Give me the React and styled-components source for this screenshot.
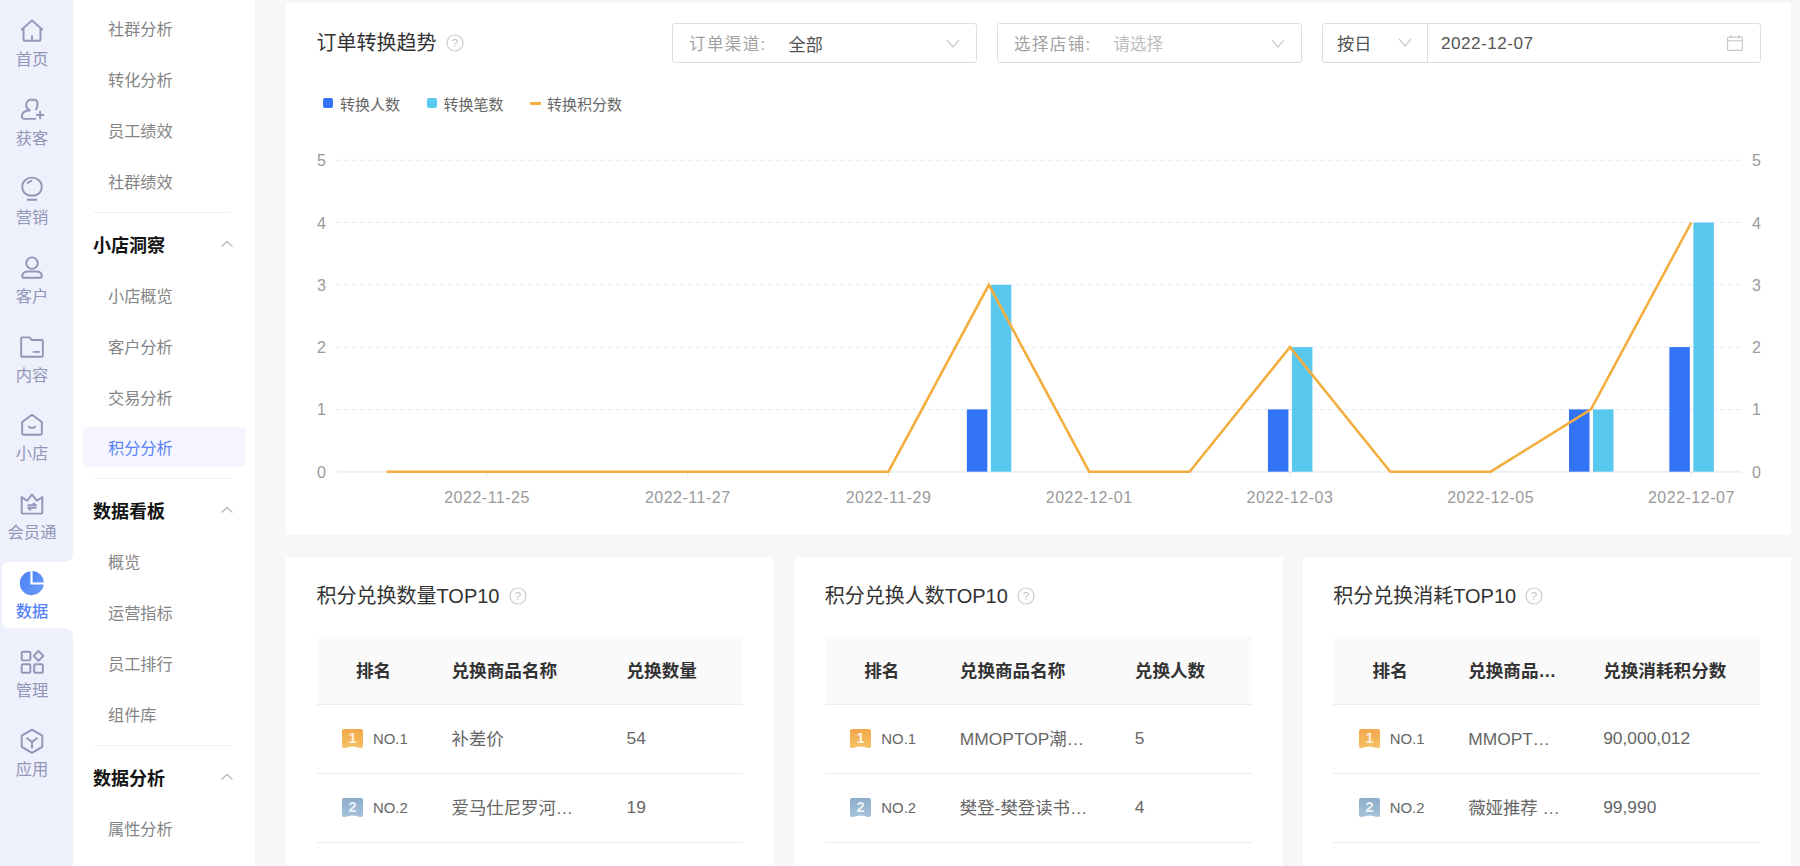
import React from "react";
import styled, { createGlobalStyle } from "styled-components";

const GlobalStyle = createGlobalStyle`
	html, body, #root { margin: 0; padding: 0; height: 100%; }
	body {
		background: #f7f7f7;
		font-family: "Liberation Sans", "Noto Sans CJK SC", sans-serif;
		overflow: hidden;
	}
	* { box-sizing: border-box; }
`;

const RAIL_BG = "#eef0fc";
const RAIL_TEXT = "#9296b7";
const BLUE = "#5b84f8";

const Page = styled.div`
	display: flex;
	width: 1800px;
	height: 866px;
	overflow: hidden;
`;

const Rail = styled.nav`
	width: 73px;
	flex: none;
	padding-top: 10px;
	background: ${RAIL_BG};
	display: flex;
	flex-direction: column;
	gap: 12.9px;
`;

const RailItem = styled.a`
	position: relative;
	height: 66px;
	margin-left: 2px;
	padding: 8px 11px 0 0;
	display: flex;
	flex-direction: column;
	align-items: center;
	border-radius: 6px 0 0 6px;
	font-size: 16.3px;
	line-height: 22px;
	white-space: nowrap;
	color: ${(p) => (p.$active ? BLUE : RAIL_TEXT)};
	background: ${(p) => (p.$active ? "#fff" : "transparent")};
	font-weight: ${(p) => (p.$active ? 500 : 400)};
	svg { display: block; margin-bottom: 4px; }

	${(p) =>
		p.$active &&
		`
		&::before, &::after {
			content: "";
			position: absolute;
			right: 0;
			width: 8px;
			height: 8px;
		}
		&::before {
			top: -8px;
			background: radial-gradient(circle at 0 0, transparent 7.5px, #fff 8px);
		}
		&::after {
			bottom: -8px;
			background: radial-gradient(circle at 0 100%, transparent 7.5px, #fff 8px);
		}
	`}
`;

const SubNav = styled.aside`
	width: 182px;
	flex: none;
	background: #fff;
	padding: 8px 9px 0 10px;
	display: flex;
	flex-direction: column;
	gap: 10.95px;
`;

const SubItem = styled.a`
	height: 40px;
	flex: none;
	padding-left: 25px;
	display: flex;
	align-items: center;
	font-size: 16.2px;
	border-radius: 4px;
	color: ${(p) => (p.$active ? BLUE : "#858585")};
	background: ${(p) => (p.$active ? "#f4f5fe" : "transparent")};
`;

const SubHead = styled.div`
	height: 40px;
	flex: none;
	padding: 0 12px 0 10px;
	display: flex;
	align-items: center;
	justify-content: space-between;
	font-size: 18px;
	font-weight: 700;
	color: #141414;
`;

const SubDivider = styled.div`
	height: 1px;
	flex: none;
	margin: 0 16px 0 10px;
	background: #f0f0f0;
`;

const Main = styled.main`
	flex: 1;
	min-width: 0;
	padding: 3px 9px 0 31px;
	display: flex;
	flex-direction: column;
	gap: 21.5px;
`;

const Card = styled.section`
	background: #fff;
	padding: 20px 30px 16px 30.5px;
`;

const CardHead = styled.div`
	display: flex;
	align-items: center;
	height: 40px;
`;

const Title = styled.h2`
	margin: 0 auto 0 0;
	display: flex;
	align-items: center;
	gap: 9px;
	font-size: 20px;
	font-weight: 400;
	line-height: 28px;
	color: #333;
`;

const Filters = styled.div`
	display: flex;
	gap: 20.5px;
`;

const Select = styled.div`
	width: 304.5px;
	height: 40px;
	padding: 0 16px;
	display: flex;
	align-items: center;
	border: 1px solid #dedede;
	border-radius: 3px;
	font-size: 17.2px;
	color: #555;
`;

const SelectLabel = styled.span`
	width: 99.5px;
	flex: none;
	font-size: 16.5px;
	letter-spacing: 1.4px;
	color: #a2a2a2;
`;

const SelectValue = styled.span`
	flex: 1;
	color: ${(p) => (p.$empty ? "#bdbdbd" : "#555")};
	font-size: ${(p) => (p.$empty ? "16.5px" : "17.2px")};
`;

const DateGroup = styled.div`
	width: 439px;
	height: 40px;
	display: flex;
	align-items: center;
	border: 1px solid #dedede;
	border-radius: 3px;
	font-size: 17.2px;
	color: #555;
`;

const GroupUnit = styled.div`
	width: 105px;
	height: 100%;
	flex: none;
	padding: 0 15px 2px 14px;
	display: flex;
	align-items: center;
	justify-content: space-between;
	border-right: 1px solid #dedede;
`;

const GroupDate = styled.div`
	flex: 1;
	padding: 0 17px 0 13px;
	display: flex;
	align-items: center;
	justify-content: space-between;
	letter-spacing: 0.45px;
`;

const Legend = styled.div`
	height: 20px;
	margin: 30px 0 0 6.5px;
	display: flex;
	align-items: center;
	font-size: 15px;
	color: #666;
`;

const LegendItem = styled.span`
	display: flex;
	align-items: center;
	margin-right: 26.5px;
	&::before {
		content: "";
		width: ${(p) => (p.$line ? "11px" : "10px")};
		height: ${(p) => (p.$line ? "3px" : "10px")};
		margin-right: ${(p) => (p.$line ? "6px" : "7px")};
		border-radius: ${(p) => (p.$line ? "1px" : "2px")};
		background: ${(p) => p.$color};
	}
`;

const ChartBox = styled.div`
	margin-top: 15.5px;
	height: 390.5px;
	svg { display: block; }
	text { font-family: "Liberation Sans", sans-serif; font-size: 16px; fill: #9a9a9a; }
`;

const TopGrid = styled.div`
	display: grid;
	grid-template-columns: repeat(3, 1fr);
	gap: 20px;
`;

const TopCard = styled(Card)`
	padding: 25px 31px 40px 30.5px;
`;

const TableWrap = styled.div`
	margin-top: 27.5px;
`;

const Row = styled.div`
	display: grid;
	grid-template-columns: ${(p) => p.$columns};
	align-items: center;
	height: ${(p) => (p.$head ? "67.5px" : "69px")};
	border-bottom: 1px solid #ececec;
	background: ${(p) => (p.$head ? "#fafafa" : "#fff")};
	font-size: ${(p) => (p.$head ? "17.6px" : "17.4px")};
	font-weight: ${(p) => (p.$head ? 600 : 400)};
	color: ${(p) => (p.$head ? "#333" : "#666")};
`;

const Cell = styled.div`
	min-width: 0;
	padding: 0 21px ${(p) => (p.$nudge ? "2px" : "0")};
	overflow: hidden;
	white-space: nowrap;
	text-overflow: ellipsis;
	text-align: ${(p) => (p.$center ? "center" : "left")};
`;

const RankCell = styled.div`
	display: flex;
	align-items: center;
	gap: 10px;
	padding-left: 25.5px;
	font-size: 14.9px;
`;

function Icon({ children, color = RAIL_TEXT, sw = 1.8 }) {
	return (
		<svg width="26" height="26" viewBox="0 0 24 24" fill="none" stroke={color} strokeWidth={sw} strokeLinecap="round" strokeLinejoin="round">
			{children}
		</svg>
	);
}

const railIcons = {
	home: (
		<Icon>
			<path d="M12 2.2 2.6 10.6h1.6v9.2c0 .8.5 1.2 1.2 1.2h13.2c.7 0 1.2-.4 1.2-1.2v-9.2h1.6zM12 16.5V21" />
		</Icon>
	),
	add: (
		<Icon>
			<path d="M15.6 11.4c.9-1 1.4-2.2 1.4-3.7V5.6C17 3.9 15.6 2.6 13.900 2.6h-3C8.400 2.600 6.600 4.700 6.600 7.200c0 2.500 1.400 4.300 3.400 5.100-3.300.3-7.200 1.500-7.200 5v1.500c0 .9.600 1.400 1.400 1.400H15" />
			<path d="M19.500 13.600v6M16.500 16.600h6" />
		</Icon>
	),
	bulb: (
		<Icon>
			<path d="M9 18c-3.500-1.200-6-4.200-6-8 0-4.800 4-8.500 9-8.500s9 3.700 9 8.500c0 3.800-2.500 6.800-6 8z" />
			<path d="M8 6.500c1-1.100 2.300-1.700 3.500-1.800M8 22h8" />
		</Icon>
	),
	user: (
		<Icon>
			<circle cx="12" cy="7.500" r="5.300" />
			<path d="M3 19.400c0-3 2.600-4.200 5-4.200h8c2.400 0 5 1.200 5 4.200v.500c0 .8-.4 1.100-1.100 1.100H4.100c-.7 0-1.100-.3-1.100-1.100z" />
		</Icon>
	),
	folder: (
		<Icon>
			<path d="M2 4.200c0-.7.400-1.100 1.100-1.100h6.500l2.300 2.500h9c.7 0 1.100.4 1.100 1.100v13.200c0 .7-.4 1.100-1.100 1.100H3.100c-.7 0-1.100-.4-1.100-1.100zM13.500 16.500h5" />
		</Icon>
	),
	shop: (
		<Icon>
			<path d="M12 2.500 2.900 9.200v10.500c0 .8.500 1.300 1.300 1.300h15.600c.8 0 1.300-.5 1.300-1.300V9.200zM9 13.500c1.500 1.600 4.500 1.600 6 0" />
		</Icon>
	),
	crown: (
		<Icon>
			<path d="M2.500 5.500 7.500 9 12 3.200 16.500 9l5-3.500v14.200c0 .8-.4 1.200-1.200 1.200H3.700c-.8 0-1.200-.4-1.200-1.200zM8.500 13.200h7l-2-1.700M15.500 15.500h-7l2 1.700" />
		</Icon>
	),
	pie: (
		<svg width="26" height="26" viewBox="-1 -1 26 26">
			<defs>
				<linearGradient id="pieFill" x1="0" y1="0" x2="1" y2="1">
					<stop offset="0" stopColor="#4a80f5" />
					<stop offset="1" stopColor="#6c9bfb" />
				</linearGradient>
			</defs>
			<path d="M10.400.3v13.300h13.300A12 12 0 1 1 10.400.3z" fill="url(#pieFill)" />
			<path d="M12.600 0A12 12 0 0 1 24 11.400H12.600z" fill="url(#pieFill)" />
		</svg>
	),
	grid: (
		<Icon>
			<rect x="2.500" y="2.500" width="8" height="8" rx="1" />
			<rect x="2.500" y="14" width="8" height="8" rx="1" />
			<rect x="14" y="14" width="8" height="8" rx="1" />
			<path d="m18 1.800 4.500 4.500-4.500 4.500-4.500-4.500z" />
		</Icon>
	),
	cube: (
		<Icon>
			<path d="M12 1.500 21.500 7v10.500L12 23l-9.500-5.500V7zM7.500 9.500 12 13l4.500-3.500M12 13v5" />
		</Icon>
	),
};

const railItems = [
	["home", "首页"],
	["add", "获客"],
	["bulb", "营销"],
	["user", "客户"],
	["folder", "内容"],
	["shop", "小店"],
	["crown", "会员通"],
	["pie", "数据", true],
	["grid", "管理"],
	["cube", "应用"],
];

const subNav = [
	{ items: ["社群分析", "转化分析", "员工绩效", "社群绩效"] },
	{ title: "小店洞察", items: ["小店概览", "客户分析", "交易分析", "积分分析"], active: "积分分析" },
	{ title: "数据看板", items: ["概览", "运营指标", "员工排行", "组件库"] },
	{ title: "数据分析", items: ["属性分析"] },
];

const Chevron = ({ up, size = 14, color = "#bcbcbc" }) => (
	<svg width={size} height={size} viewBox="0 0 14 14" fill="none" stroke={color} strokeWidth={up ? 1.4 : 1.1}>
		<path d={up ? "M1.500 9.500 7 4.500l5.500 5" : "M1 4l6 7 6-7"} />
	</svg>
);

const Help = () => (
	<svg width="18" height="18" viewBox="0 0 18 18">
		<circle cx="9" cy="9" r="8" fill="none" stroke="#cbcbcb" strokeWidth="1.200" />
		<text x="9" y="13" textAnchor="middle" fontSize="11.500" fill="#bdbdbd" fontFamily="Liberation Sans">?</text>
	</svg>
);

const CalendarIcon = () => (
	<svg width="16" height="16" viewBox="0 0 16 16" fill="none" stroke="#c6c6c6" strokeWidth="1.100">
		<rect x="0.600" y="2.100" width="14.800" height="13.300" rx="0.800" />
		<path d="M.6 5.800h14.800M4.200 0v3.500M11.800 0v3.500" />
	</svg>
);

const Badge = ({ rank }) => {
	const gold = rank === 1;
	return (
		<svg width="21" height="19" viewBox="0 0 21 19">
			<defs>
				<linearGradient id={"badge" + rank} x1="0" y1="0" x2="0" y2="1">
					<stop offset="0" stopColor={gold ? "#f3a84a" : "#8cadcb"} />
					<stop offset="1" stopColor={gold ? "#f6c166" : "#a6c2da"} />
				</linearGradient>
			</defs>
			<path d="M2 0h17a2 2 0 0 1 2 2v15c0 1.500-1 2-2.200 2-2.800 0-4.500-1.500-8.300-1.500S5 19 2.200 19C1 19 0 18.500 0 17V2a2 2 0 0 1 2-2z" fill={`url(#badge${rank})`} />
			<text x="10.500" y="14.300" textAnchor="middle" fontSize="14.500" fontWeight="700" fill="#fff" fillOpacity=".85" fontFamily="Liberation Sans">{rank}</text>
		</svg>
	);
};

// chart sizes, measured from the svg's top left corner
const plot = { left: 19.5, right: 1424.5, base: 342.7, unit: 62.3, band: 100.36 };
const dates = ["11-24", "11-25", "11-26", "11-27", "11-28", "11-29", "11-30", "12-01", "12-02", "12-03", "12-04", "12-05", "12-06", "12-07"];
const people = [0, 0, 0, 0, 0, 0, 1, 0, 0, 1, 0, 0, 1, 2];
const orders = [0, 0, 0, 0, 0, 0, 3, 0, 0, 2, 0, 0, 1, 4];
const points = [0, 0, 0, 0, 0, 0, 3, 0, 0, 2, 0, 0, 1, 4];
const xAt = (i) => plot.left + plot.band * (i + 0.5);
const yAt = (v) => plot.base - plot.unit * v;

function TrendChart() {
	return (
		<svg width="1445" height="390" viewBox="0 0 1445 390">
			{[1, 2, 3, 4, 5].map((v) => (
				<line key={v} x1={plot.left} x2={plot.right} y1={yAt(v)} y2={yAt(v)} stroke="#dfe5f3" strokeWidth="1" strokeDasharray="4 4" />
			))}
			<line x1={plot.left} x2={plot.right} y1={plot.base} y2={plot.base} stroke="#eff0f3" strokeWidth="2" />
			{[0, 1, 2, 3, 4, 5].map((v) => (
				<g key={v}>
					<text x="0" y={yAt(v) + 6}>{v}</text>
					<text x="1435" y={yAt(v) + 6}>{v}</text>
				</g>
			))}
			{dates.map((d, i) =>
				i % 2 === 1 ? (
					<g key={d}>
						<line x1={xAt(i)} x2={xAt(i)} y1={plot.base} y2={plot.base + 5} stroke="#e6e6e6" />
						<text x={xAt(i)} y={plot.base + 31} textAnchor="middle" letterSpacing="0.5">{"2022-" + d}</text>
					</g>
				) : null
			)}
			{people.map((v, i) =>
				v ? <rect key={i} x={xAt(i) - 22} y={yAt(v)} width="20.500" height={plot.unit * v} fill="#3374f6" /> : null
			)}
			{orders.map((v, i) =>
				v ? <rect key={i} x={xAt(i) + 2} y={yAt(v)} width="20.500" height={plot.unit * v} fill="#59c8ee" /> : null
			)}
			<polyline points={points.map((v, i) => `${xAt(i)},${yAt(v)}`).join(" ")} fill="none" stroke="#f4ae3f" strokeWidth="2.600" strokeLinejoin="miter" />
		</svg>
	);
}

const wideName = "114px 175px 1fr";
const narrowName = "114px 135px 1fr";

const tables = [
	{
		title: "积分兑换数量TOP10",
		columns: wideName,
		valueHead: "兑换数量",
		rows: [
			["补差价", "54"],
			["爱马仕尼罗河花园淡香水", "19"],
		],
	},
	{
		title: "积分兑换人数TOP10",
		columns: wideName,
		valueHead: "兑换人数",
		rows: [
			["MMOPTOP潮流玩具盲盒", "5"],
			["樊登-樊登读书年卡会员", "4"],
		],
	},
	{
		title: "积分兑换消耗TOP10",
		columns: narrowName,
		valueHead: "兑换消耗积分数",
		rows: [
			["MMOPTOP潮流玩具盲盒", "90,000,012"],
			["薇娅推荐 好物礼盒", "99,990"],
		],
	},
];

function TopTable({ title, columns, valueHead, rows }) {
	return (
		<TopCard>
			<Title>
				{title} <Help />
			</Title>
			<TableWrap>
				<Row $head $columns={columns}>
					<Cell $center $nudge>排名</Cell>
					<Cell $nudge>兑换商品名称</Cell>
					<Cell $nudge>{valueHead}</Cell>
				</Row>
				{rows.map(([name, value], i) => (
					<Row key={name} $columns={columns}>
						<RankCell>
							<Badge rank={i + 1} />
							NO.{i + 1}
						</RankCell>
						<Cell $nudge>{name}</Cell>
						<Cell>{value}</Cell>
					</Row>
				))}
			</TableWrap>
		</TopCard>
	);
}

export default function App() {
	return (
		<Page>
			<GlobalStyle />
			<Rail>
				{railItems.map(([icon, label, active]) => (
					<RailItem key={label} $active={active}>
						{railIcons[icon]}
						{label}
					</RailItem>
				))}
			</Rail>

			<SubNav>
				{subNav.map((group, i) => (
					<React.Fragment key={i}>
						{group.title && (
							<>
								<SubDivider />
								<SubHead>
									{group.title}
									<Chevron up />
								</SubHead>
							</>
						)}
						{group.items.map((item) => (
							<SubItem key={item} $active={item === group.active}>
								{item}
							</SubItem>
						))}
					</React.Fragment>
				))}
			</SubNav>

			<Main>
				<Card>
					<CardHead>
						<Title>
							订单转换趋势 <Help />
						</Title>
						<Filters>
							<Select>
								<SelectLabel>订单渠道:</SelectLabel>
								<SelectValue>全部</SelectValue>
								<Chevron />
							</Select>
							<Select>
								<SelectLabel>选择店铺:</SelectLabel>
								<SelectValue $empty>请选择</SelectValue>
								<Chevron />
							</Select>
							<DateGroup>
								<GroupUnit>
									按日
									<Chevron />
								</GroupUnit>
								<GroupDate>
									2022-12-07
									<CalendarIcon />
								</GroupDate>
							</DateGroup>
						</Filters>
					</CardHead>
					<Legend>
						<LegendItem $color="#3374f6">转换人数</LegendItem>
						<LegendItem $color="#59c8ee">转换笔数</LegendItem>
						<LegendItem $color="#f4ae3f" $line>转换积分数</LegendItem>
					</Legend>
					<ChartBox>
						<TrendChart />
					</ChartBox>
				</Card>

				<TopGrid>
					{tables.map((t) => (
						<TopTable key={t.title} {...t} />
					))}
				</TopGrid>
			</Main>
		</Page>
	);
}
